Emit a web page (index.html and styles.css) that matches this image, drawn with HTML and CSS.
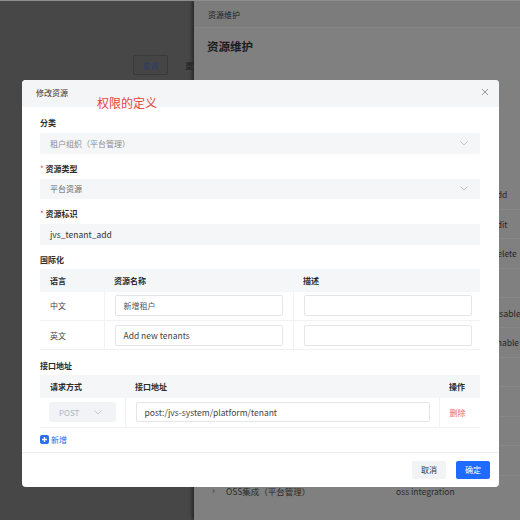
FILE: index.html
```html
<!DOCTYPE html>
<html lang="zh-CN">
<head>
  <meta charset="UTF-8" />
  <title>资源维护</title>
  <link rel="stylesheet" href="styles.css">
</head>
<body>
  <div class="page">
    <div class="left">
      <div class="toolbar">
        <button class="btn-query">查询</button>
        <span class="btn-reset">重置</span>
      </div>
    </div>

    <div class="drawer">
      <div class="drawer-head">资源维护</div>
      <div class="drawer-title">资源维护</div>
      <ul class="drawer-rows">
        <li><span class="c-name"></span><span class="c-code">add</span></li>
        <li><span class="c-name"></span><span class="c-code">edit</span></li>
        <li><span class="c-name"></span><span class="c-code">delete</span></li>
        <li><span class="c-name"></span><span class="c-code"></span></li>
        <li><span class="c-name"></span><span class="c-code">disable</span></li>
        <li><span class="c-name"></span><span class="c-code">enable</span></li>
        <li><span class="c-name"></span><span class="c-code"></span></li>
        <li><span class="c-name"></span><span class="c-code"></span></li>
        <li><span class="c-name"></span><span class="c-code"></span></li>
        <li><span class="c-name"></span><span class="c-code">t</span></li>
        <li class="group"><span class="arrow">›</span><span class="c-group">OSS集成（平台管理）</span><span class="c-en">oss integration</span></li>
      </ul>
    </div>
  </div>

  <div class="modal">
    <div class="modal-head">
      <span class="modal-title">修改资源</span>
      <svg class="close" width="8" height="8" viewBox="0 0 8 8"><path d="M1 1L7 7M7 1L1 7" stroke="#9a9a9a" stroke-width="1"/></svg>
    </div>
    <span class="note">权限的定义</span>

    <div class="modal-body">
      <div class="label">分类</div>
      <div class="field select disabled">租户组织（平台管理）
        <svg class="chev" width="8" height="5" viewBox="0 0 8 5"><path d="M0.5 0.5L4 4L7.5 0.5" fill="none" stroke="#c0c0c0"/></svg>
      </div>

      <div class="label"><span class="req">*</span> 资源类型</div>
      <div class="field select">平台资源
        <svg class="chev" width="8" height="5" viewBox="0 0 8 5"><path d="M0.5 0.5L4 4L7.5 0.5" fill="none" stroke="#c0c0c0"/></svg>
      </div>

      <div class="label"><span class="req">*</span> 资源标识</div>
      <div class="field text">jvs_tenant_add</div>

      <div class="label tight">国际化</div>
      <table class="grid i18n">
        <thead>
          <tr><th class="w-lang">语言</th><th class="w-name">资源名称</th><th>描述</th></tr>
        </thead>
        <tbody>
          <tr>
            <td>中文</td>
            <td><div class="input">新增租户</div></td>
            <td class="pr8"><div class="input"></div></td>
          </tr>
          <tr>
            <td>英文</td>
            <td><div class="input dark">Add new tenants</div></td>
            <td class="pr8"><div class="input"></div></td>
          </tr>
        </tbody>
      </table>

      <div class="label tight api-label">接口地址</div>
      <table class="grid api">
        <thead>
          <tr><th class="w-method">请求方式</th><th class="w-url">接口地址</th><th>操作</th></tr>
        </thead>
        <tbody>
          <tr>
            <td class="pl9">
              <div class="method">POST
                <svg width="8" height="5" viewBox="0 0 8 5"><path d="M0.5 0.5L4 4L7.5 0.5" fill="none" stroke="#c8c8c8"/></svg>
              </div>
            </td>
            <td><div class="input dark url">post:/jvs-system/platform/tenant</div></td>
            <td><span class="del">删除</span></td>
          </tr>
        </tbody>
      </table>

      <div class="add-row">
        <svg width="9" height="9" viewBox="0 0 9 9"><rect width="9" height="9" rx="2" fill="#2a6df0"/><path d="M4.5 2V7M2 4.5H7" stroke="#fff" stroke-width="1.3"/></svg>
        <span>新增</span>
      </div>
    </div>

    <div class="modal-foot">
      <button class="btn cancel">取消</button>
      <button class="btn ok">确定</button>
    </div>
  </div>
</body>
</html>
```

FILE: styles.css
```css
* { box-sizing: border-box; }
body {
  margin: 0;
  width: 520px;
  height: 520px;
  overflow: hidden;
  position: relative;
  font-family: "Noto Sans CJK SC", "Noto Sans", sans-serif;
  font-size: 8px;
  color: #333;
  background: #474747;
  border-top: 1px solid #8e8e8e;
}
.page {
  display: flex;
  height: 519px;
}
.left {
  width: 194px;
  flex-shrink: 0;
  background: #474747;
  overflow: hidden;
}
.toolbar {
  display: flex;
  align-items: center;
  padding: 54px 0 0 133px;
  white-space: nowrap;
}
.btn-query {
  flex-shrink: 0;
  width: 35px;
  height: 20px;
  font: inherit;
  color: #2c3d68;
  background: #454545;
  border: 1px solid #3a3a3a;
  border-radius: 2px;
  padding: 0;
}
.btn-reset { flex-shrink: 0; margin-left: 17px; color: #202020; }

.drawer {
  flex: 1;
  background: #808080;
  box-shadow: -2px 0 3px rgba(0,0,0,0.45);
  position: relative;
  z-index: 1;
  overflow: hidden;
}
.drawer-head {
  height: 27px;
  line-height: 27px;
  padding-left: 14px;
  background: #7c7c7c;
  border-bottom: 1px solid #858585;
  color: #222;
}
.drawer-title {
  padding: 10px 0 0 13px;
  font-size: 11.5px;
  font-weight: bold;
  color: #1c1c1c;
  line-height: 16px;
}
.drawer-rows {
  list-style: none;
  margin: 0;
  padding: 0;
  position: absolute;
  top: 179px;
  left: 0;
  right: 0;
}
.drawer-rows li {
  height: 29.6px;
  display: flex;
  align-items: center;
  border-bottom: 1px solid #878787;
  color: #262626;
  white-space: nowrap;
}
.c-name { width: 298px; flex-shrink: 0; }
.c-code { font-size: 8.5px; }
.drawer-rows li.group { border-bottom: none; }
.arrow { width: 14px; margin-left: 18px; flex-shrink: 0; color: #333; font-size: 9px; }
.c-group { width: 170px; flex-shrink: 0; color: #2a2a2a; font-size: 8.5px; }
.c-en { color: #2a2a2a; font-size: 8.5px; }

.modal {
  position: absolute;
  left: 22px;
  top: 79px;
  width: 477px;
  height: 407px;
  background: #fff;
  border-radius: 4px;
  z-index: 2;
  overflow: hidden;
  display: flex;
  flex-direction: column;
}
.modal-head {
  height: 27px;
  background: #f4f5f7;
  display: flex;
  align-items: center;
  justify-content: space-between;
  padding: 0 10px 2px 14px;
}
.modal-title { color: #333; }
.close { margin-top: -2px; }
.note {
  position: absolute;
  left: 75px;
  top: 16px;
  font-size: 12px;
  line-height: 14px;
  color: #e5443b;
}
.modal-body {
  flex: 1;
  padding: 10px 19px 0 18px;
}
.label {
  height: 12px;
  line-height: 12px;
  margin-bottom: 4px;
  font-weight: bold;
  color: #2b2b2b;
}
.label.tight { margin-bottom: 3px; }
.req { color: #e5443b; font-weight: normal; }
.field {
  height: 20.5px;
  margin-bottom: 9px;
  background: #f5f6f8;
  border-radius: 2px;
  padding: 0 10px;
  display: flex;
  align-items: center;
  justify-content: space-between;
}
.field.select { color: #666; }
.field.disabled { color: #8c8c8c; }
.field.text { color: #333; font-size: 8.5px; }
.chev { margin-right: 2px; }

.grid {
  width: 100%;
  border-collapse: collapse;
  table-layout: fixed;
}
.grid th {
  height: 23px;
  background: #f5f6f8;
  text-align: left;
  font-weight: bold;
  padding: 0 10px;
  color: #2b2b2b;
}
.grid td {
  height: 29px;
  padding: 0 10px;
  border-bottom: 1px solid #f0f1f3;
  color: #444;
}
.grid td + td { border-left: 1px solid #f0f1f3; }
.grid td.pr8 { padding-right: 8px; }
.w-lang { width: 64px; }
.w-name { width: 189px; }
.w-method { width: 85px; }
.w-url { width: 314px; }
.input {
  height: 21px;
  border: 1px solid #e3e5e9;
  border-radius: 2px;
  padding: 0 8px;
  display: flex;
  align-items: center;
  color: #555;
}
.input.dark { color: #444; font-size: 8.5px; }
.api .input { height: 20px; }
.url { margin-right: -1px; }
.pl9 { padding-left: 9px !important; }
.method {
  width: 67px;
  height: 20px;
  background: #f1f3f6;
  border-radius: 2px;
  display: flex;
  align-items: center;
  justify-content: space-between;
  padding: 0 14px 0 10px;
  color: #b0b3b8;
}
.del { color: #e66b6b; }
.api-label { margin-top: 10px; }

.add-row {
  margin-top: 6px;
  height: 12px;
  display: flex;
  align-items: center;
  gap: 2px;
  color: #2a6df0;
}

.modal-foot {
  height: 35px;
  border-top: 1px solid #eef0f2;
  display: flex;
  justify-content: flex-end;
  align-items: center;
  gap: 10px;
  padding: 0 9px 1px 0;
}
.btn {
  width: 34px;
  height: 18px;
  border: none;
  border-radius: 2px;
  font: inherit;
  padding: 0;
}
.cancel { background: #f2f3f5; color: #333; }
.ok { background: #1f6bff; color: #fff; }
```
